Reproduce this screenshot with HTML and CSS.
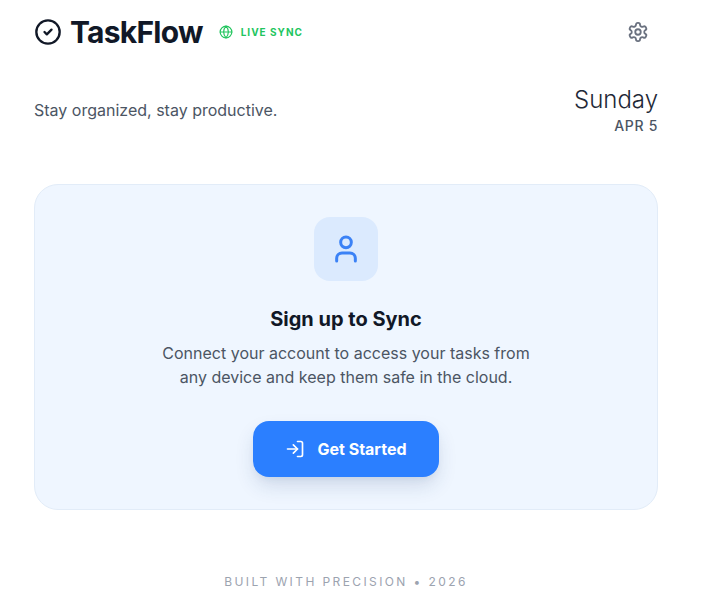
FILE: index.html
```html
<!DOCTYPE html>
<html lang="en">
<head>
    <meta charset="UTF-8">
    <meta name="viewport" content="width=device-width, initial-scale=1.0">
    <title>TaskFlow</title>
    <link rel="stylesheet" href="styles.css">
</head>
<body>
    <div class="container">
        <header class="header">
            <div class="brand">
                <svg class="brand-icon" viewBox="0 0 24 24" fill="none" stroke="currentColor" stroke-width="2" stroke-linecap="round" stroke-linejoin="round">
                    <circle cx="12" cy="12" r="10"></circle>
                    <path d="m9 12 2 2 4-4"></path>
                </svg>
                <h1>TaskFlow</h1>
                <div class="live">
                    <svg class="live-icon" viewBox="0 0 24 24" fill="none" stroke="currentColor" stroke-width="2" stroke-linecap="round" stroke-linejoin="round">
                        <circle cx="12" cy="12" r="10"></circle>
                        <path d="M12 2a14.5 14.5 0 0 0 0 20 14.5 14.5 0 0 0 0-20"></path>
                        <path d="M2 12h20"></path>
                    </svg>
                    <span>LIVE SYNC</span>
                </div>
            </div>
            <button class="settings" type="button" aria-label="Settings">
                <svg viewBox="0 0 24 24" fill="none" stroke="currentColor" stroke-width="2" stroke-linecap="round" stroke-linejoin="round">
                    <path d="M12.22 2h-.44a2 2 0 0 0-2 2v.18a2 2 0 0 1-1 1.73l-.43.25a2 2 0 0 1-2 0l-.15-.08a2 2 0 0 0-2.73.73l-.22.38a2 2 0 0 0 .73 2.73l.15.1a2 2 0 0 1 1 1.72v.51a2 2 0 0 1-1 1.74l-.15.09a2 2 0 0 0-.73 2.73l.22.38a2 2 0 0 0 2.73.73l.15-.08a2 2 0 0 1 2 0l.43.25a2 2 0 0 1 1 1.73V20a2 2 0 0 0 2 2h.44a2 2 0 0 0 2-2v-.18a2 2 0 0 1 1-1.73l.43-.25a2 2 0 0 1 2 0l.15.08a2 2 0 0 0 2.73-.73l.22-.39a2 2 0 0 0-.73-2.73l-.15-.08a2 2 0 0 1-1-1.74v-.5a2 2 0 0 1 1-1.74l.15-.09a2 2 0 0 0 .73-2.73l-.22-.38a2 2 0 0 0-2.73-.73l-.15.08a2 2 0 0 1-2 0l-.43-.25a2 2 0 0 1-1-1.73V4a2 2 0 0 0-2-2z"></path>
                    <circle cx="12" cy="12" r="3"></circle>
                </svg>
            </button>
        </header>

        <div class="subhead">
            <p class="tagline">Stay organized, stay productive.</p>
            <div class="date">
                <div class="day">Sunday</div>
                <div class="month">APR 5</div>
            </div>
        </div>

        <section class="card">
            <div class="card-icon">
                <svg viewBox="0 0 24 24" fill="none" stroke="currentColor" stroke-width="2.25" stroke-linecap="round" stroke-linejoin="round">
                    <path d="M19 21v-2a4 4 0 0 0-4-4H9a4 4 0 0 0-4 4v2"></path>
                    <circle cx="12" cy="7" r="4"></circle>
                </svg>
            </div>
            <h2>Sign up to Sync</h2>
            <p>Connect your account to access your tasks from any device and keep them safe in the cloud.</p>
            <button class="cta" type="button">
                <svg viewBox="0 0 24 24" fill="none" stroke="currentColor" stroke-width="2" stroke-linecap="round" stroke-linejoin="round">
                    <path d="M15 3h4a2 2 0 0 1 2 2v14a2 2 0 0 1-2 2h-4"></path>
                    <path d="m10 17 5-5-5-5"></path>
                    <path d="M15 12H3"></path>
                </svg>
                Get Started
            </button>
        </section>

        <footer class="footer">BUILT WITH PRECISION • 2026</footer>
    </div>
</body>
</html>
```

FILE: styles.css
```css
body {
    margin: 0;
    background: #ffffff;
    font-family: Inter, "Liberation Sans", sans-serif;
    color: #111827;
}
.container {
    width: 624px;
    margin-left: 34px;
    padding-top: 12px;
}
.header {
    display: flex;
    justify-content: space-between;
    align-items: center;
    height: 40px;
}
.brand {
    display: flex;
    align-items: center;
}
.brand-icon {
    width: 28px;
    height: 28px;
    margin-right: 8px;
}
h1 {
    margin: 0;
    font-size: 30px;
    font-weight: 700;
    letter-spacing: -0.75px;
    line-height: 36px;
}
.live {
    display: flex;
    align-items: center;
    gap: 8px;
    margin-left: 16px;
    color: #22c55e;
    font-size: 10px;
    font-weight: 700;
    letter-spacing: 1px;
}
.live-icon {
    width: 14px;
    height: 14px;
}
.settings {
    width: 40px;
    height: 40px;
    padding: 9px;
    border: 0;
    background: none;
    color: #6b7280;
}
.settings svg {
    display: block;
    width: 22px;
    height: 22px;
}
.subhead {
    display: flex;
    justify-content: space-between;
    align-items: center;
    margin-top: 32px;
}
.tagline {
    margin: 0;
    font-size: 16px;
    color: #4b5563;
}
.date {
    text-align: right;
}
.day {
    font-size: 24px;
    font-weight: 300;
    line-height: 32px;
    color: #1f2937;
}
.month {
    font-size: 14px;
    font-weight: 500;
    line-height: 20px;
    letter-spacing: 0.7px;
    color: #4b5563;
}
.card {
    display: flex;
    flex-direction: column;
    align-items: center;
    margin-top: 48px;
    padding: 32px;
    height: 326px;
    box-sizing: border-box;
    background: #eff6ff;
    border: 1px solid #e2ecf8;
    border-radius: 24px;
    text-align: center;
}
.card-icon {
    width: 64px;
    height: 64px;
    padding: 16px;
    box-sizing: border-box;
    background: #dbeafe;
    border-radius: 16px;
    color: #3b82f6;
}
.card-icon svg {
    display: block;
    width: 32px;
    height: 32px;
}
h2 {
    margin: 24px 0 0;
    font-size: 20px;
    font-weight: 700;
    line-height: 28px;
}
.card p {
    width: 384px;
    margin: 8px 0 0;
    font-size: 16px;
    line-height: 24px;
    color: #4b5563;
}
.cta {
    display: flex;
    align-items: center;
    justify-content: center;
    gap: 12px;
    width: 186px;
    height: 56px;
    margin-top: 32px;
    border: 0;
    border-radius: 16px;
    background: #2b7fff;
    color: #ffffff;
    font-family: inherit;
    font-size: 16px;
    font-weight: 700;
    box-shadow: 0 10px 20px -2px rgba(30, 64, 120, 0.16), 0 4px 8px -4px rgba(30, 64, 120, 0.1);
}
.cta svg {
    width: 20px;
    height: 20px;
}
.footer {
    margin-top: 64px;
    text-align: center;
    font-size: 12px;
    line-height: 16px;
    letter-spacing: 2.4px;
    color: #9ca3af;
}
```
